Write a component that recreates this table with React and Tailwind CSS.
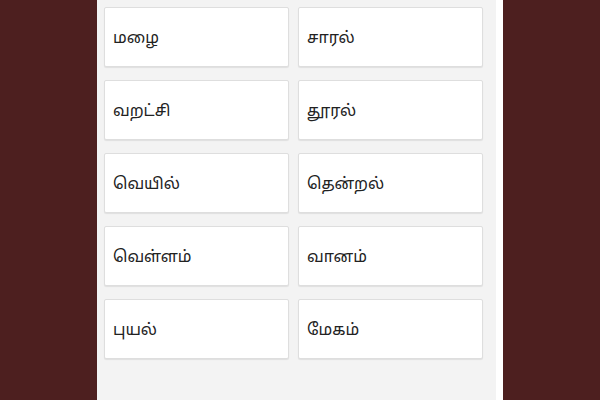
import React from "react";

const words = [
  ["மழை", "சாரல்"],
  ["வறட்சி", "தூரல்"],
  ["வெயில்", "தென்றல்"],
  ["வெள்ளம்", "வானம்"],
  ["புயல்", "மேகம்"],
];

const App = () => {
  return (
    <div className="w-[600px] h-[400px] bg-[#4d1f1f] flex justify-center overflow-hidden">
      <div className="w-[406px] h-full bg-white flex">
        {/* Word grid */}
        <div className="w-[399px] h-full bg-[#f3f3f3] pl-[7px] pt-[7px]">
          <div className="grid grid-cols-[185px_185px] gap-x-[9px] gap-y-[13px]">
            {words.flat().map((w) => (
              <div
                key={w}
                className="h-[60px] bg-white border border-[#dedede] rounded-[2px] shadow-[0_1px_1px_rgba(0,0,0,0.08)] flex items-center pl-[8px] pt-[3px] text-[16px] text-[#222]"
                style={{ fontFamily: '"Noto Sans Tamil", "Lohit Tamil", "Noto Sans", sans-serif' }}
              >
                {w}
              </div>
            ))}
          </div>
        </div>
      </div>
    </div>
  );
};

export default App;
